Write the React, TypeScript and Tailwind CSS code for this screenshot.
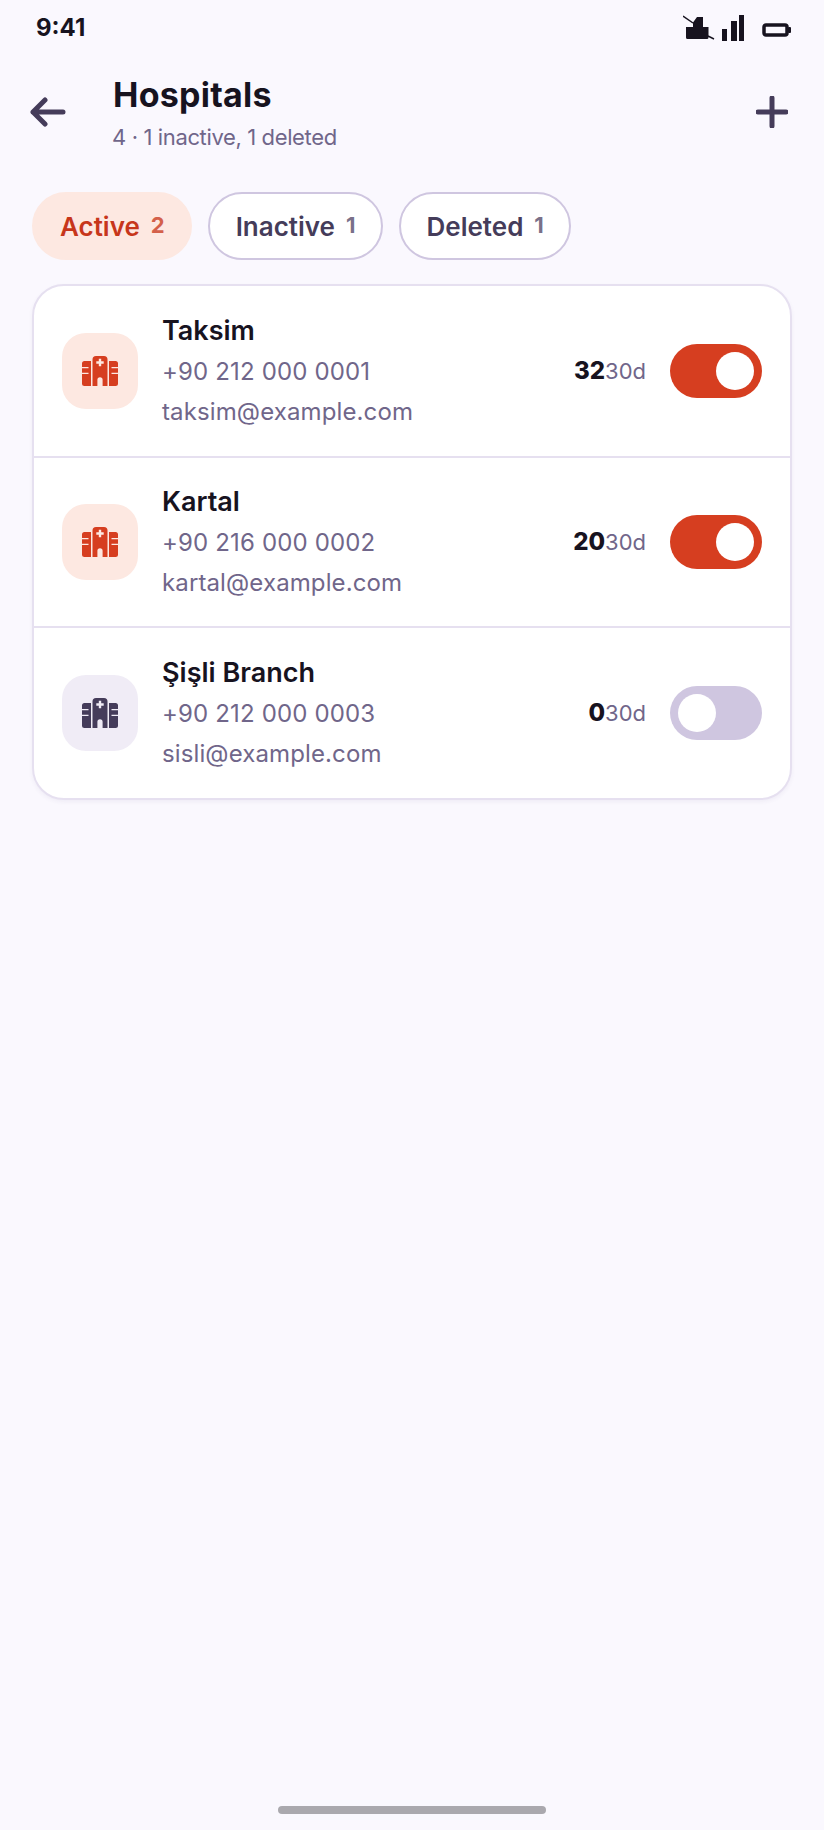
const hospitals = [
  { name: "Taksim", phone: "+90 212 000 0001", email: "taksim@example.com", used: 32, on: true },
  { name: "Kartal", phone: "+90 216 000 0002", email: "kartal@example.com", used: 20, on: true },
  { name: "Şişli Branch", phone: "+90 212 000 0003", email: "sisli@example.com", used: 0, on: false },
];

function HospitalIcon({ className }: { className: string }) {
  return (
    <svg width="36" height="30" viewBox="0 0 36 30" className={className}>
      <path
        fill="currentColor"
        fillRule="evenodd"
        d="M14 0h8a3.500 3.500 0 0 1 3.500 3.500V30H20.600v-6.200a2.600 2.600 0 0 0-5.200 0V30H10.500V3.500A3.500 3.500 0 0 1 14 0ZM16.800 2.800v2.500h-2.500v2.500h2.500v2.500h2.400V7.800h2.500V5.300h-2.500V2.800Z"
      />
      <path
        fill="currentColor"
        d="M2.500 5H9v25H2.500A2.500 2.500 0 0 1 0 27.500V18h6.500v-1.200H0v-4.600h6.500V11H0V7.500A2.500 2.500 0 0 1 2.500 5ZM27 5h6.500A2.500 2.500 0 0 1 36 7.500V11h-6.500v1.200H36v4.600h-6.500V18H36v9.500a2.500 2.500 0 0 1-2.500 2.500H27Z"
      />
    </svg>
  );
}

function StatusIcons() {
  return (
    <div className="flex items-center text-[#17131f]">
      <svg width="32" height="26" viewBox="0 0 32 26" fill="currentColor">
        <path d="M3 12h7V7.500L14 2h6v10h5.500v10.500a1.500 1.500 0 0 1-1.500 1.500H4.500A1.500 1.500 0 0 1 3 22.500Z" />
        <path d="M0 1 10 8" stroke="currentColor" strokeWidth="1.500" />
        <path d="M25 21l6 3" stroke="currentColor" strokeWidth="1.500" />
      </svg>
      <svg width="24" height="26" viewBox="0 0 24 26" fill="currentColor" className="ml-[7px]">
        <rect x="0" y="14" width="5" height="12" />
        <rect x="9" y="6" width="6" height="20" />
        <rect x="17" y="0" width="5" height="26" />
      </svg>
      <svg width="30" height="14" viewBox="0 0 30 14" className="ml-[16px] mt-[3px]">
        <rect x="2" y="2" width="23" height="10" rx="2" fill="none" stroke="currentColor" strokeWidth="3.500" />
        <rect x="26" y="4" width="3" height="6" rx="1" fill="currentColor" />
      </svg>
    </div>
  );
}

function Chip({ label, count, active }: { label: string; count: number; active?: boolean }) {
  return (
    <div
      className={
        active
          ? "flex h-[68px] items-center gap-[11px] rounded-full border-2 border-[#fde8e1] bg-[#fde8e1] pl-[26px] pr-[25px]"
          : "flex h-[68px] items-center gap-[11px] rounded-full border-2 border-[#cfc6e0] bg-white pl-[26px] pr-[25px]"
      }
    >
      <span className={active ? "text-[26px] font-semibold text-[#c7361b]" : "text-[26px] font-semibold text-[#453c5a]"}>{label}</span>
      <span className={active ? "mb-[2px] text-[22px] font-bold text-[#d4604a]" : "mb-[2px] text-[22px] font-bold text-[#7a7089]"}>{count}</span>
    </div>
  );
}

export default function App() {
  return (
    <div
      className="relative flex min-h-[1830px] flex-col bg-[#faf8fe]"
      style={{ fontFamily: "Inter, 'Noto Sans', sans-serif" }}
    >
      <div className="flex items-center justify-between pl-[36px] pr-[32px] pt-[15px]">
        <span className="text-[24px] font-bold leading-[26px] text-[#17131f]">9:41</span>
        <StatusIcons />
      </div>

      <div className="flex items-start pl-[30px] pr-[36px] pt-[34px]">
        <svg width="36" height="32" viewBox="0 0 36 32" fill="none" stroke="#453c5a" strokeWidth="5" strokeLinecap="round" strokeLinejoin="round" className="mt-[21px]">
          <path d="M33 16H3M15 4 3 16l12 12" />
        </svg>
        <div className="ml-[47px] flex flex-1 flex-col">
          <h1 className="text-[34px] font-bold leading-[40px] tracking-[0.25px] text-[#17131f]">Hospitals</h1>
          <p className="-ml-[1px] mt-[8px] text-[22px] leading-[28px] tracking-[-0.37px] text-[#70668a]">4 · 1 inactive, 1 deleted</p>
        </div>
        <svg width="32" height="32" viewBox="0 0 32 32" fill="none" stroke="#453c5a" strokeWidth="5" strokeLinecap="round" className="mt-[21px]">
          <path d="M16 2v28M2 16h28" />
        </svg>
      </div>

      <div className="mt-[41px] flex gap-[16px] px-[32px]">
        <Chip label="Active" count={2} active />
        <Chip label="Inactive" count={1} />
        <Chip label="Deleted" count={1} />
      </div>

      <div className="mx-[32px] mt-[24px] overflow-hidden rounded-[32px] border-2 border-[#e6e0f0] bg-white shadow-[0_2px_4px_rgba(70,50,120,0.06)]">
        {hospitals.map((h, i) => (
          <div
            key={h.name}
            className={
              i === 0
                ? "flex h-[170px] items-center px-[28px]"
                : i === 1
                  ? "flex h-[170px] items-center border-t-2 border-[#e6e0f0] px-[28px]"
                  : "flex h-[172px] items-center border-t-2 border-[#e6e0f0] px-[28px]"
            }
          >
            <div className={h.on ? "mb-[1px] flex h-[76px] w-[76px] items-center justify-center rounded-[24px] bg-[#fde8e1]" : "mb-[1px] flex h-[76px] w-[76px] items-center justify-center rounded-[24px] bg-[#f0ecf6]"}>
              <HospitalIcon className={h.on ? "text-[#d63e20]" : "text-[#453c5a]"} />
            </div>
            <div className="ml-[24px] flex flex-1 flex-col pb-[2px]">
              <span className="text-[27px] font-semibold leading-[34px] text-[#17131f]">{h.name}</span>
              <span className="mt-[7px] text-[24px] leading-[34px] tracking-[0.15px] text-[#70668a]">{h.phone}</span>
              <span className="mt-[8px] text-[24px] leading-[30px] tracking-[0.12px] text-[#70668a]">{h.email}</span>
            </div>
            <div className="flex items-baseline">
              <span className="text-[24px] font-extrabold text-[#17131f]">{h.used}</span>
              <span className="text-[22px] text-[#70668a]">30d</span>
            </div>
            <div className={h.on ? "ml-[24px] flex h-[54px] w-[92px] items-center justify-end rounded-full bg-[#d63e20] px-[8px]" : "ml-[24px] flex h-[54px] w-[92px] items-center rounded-full bg-[#cfc6e0] px-[8px]"}>
              <div className="h-[38px] w-[38px] rounded-full bg-white" />
            </div>
          </div>
        ))}
      </div>

      <div className="absolute bottom-[16px] left-1/2 h-[8px] w-[268px] -translate-x-1/2 rounded-full bg-[#aaa8ae]" />
    </div>
  );
}
